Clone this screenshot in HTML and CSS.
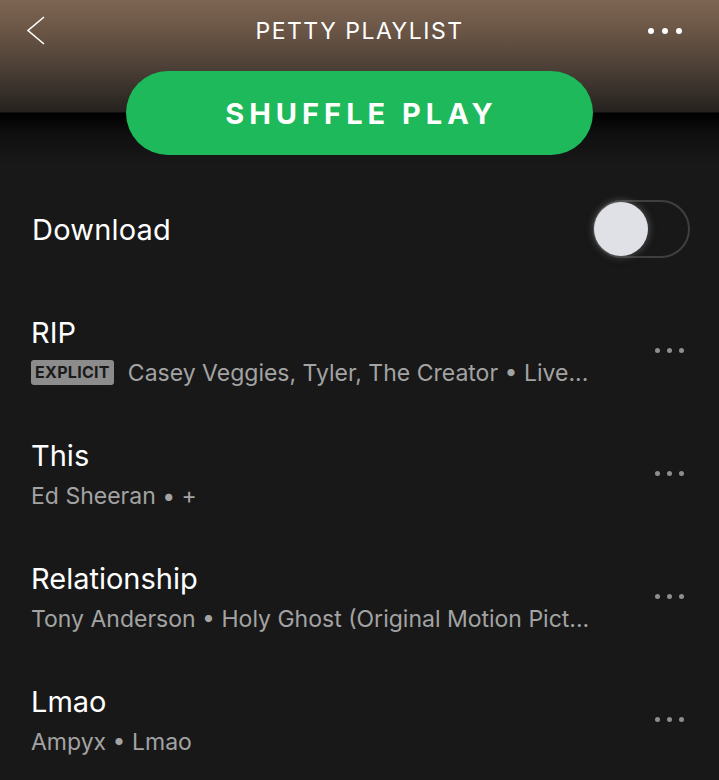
FILE: index.html
```html
<!DOCTYPE html>
<html>
<head>
<meta charset="utf-8">
<link rel="stylesheet" href="styles.css">
</head>
<body>
<div class="page">
  <header class="topbar">
    <svg class="back" width="20" height="30" viewBox="0 0 20 30"><polyline points="18,1 2,14.5 18,28" fill="none" stroke="#fff" stroke-width="1.6"/></svg>
    <div class="title">PETTY PLAYLIST</div>
    <div class="more"><span></span><span></span><span></span></div>
  </header>
  <div class="shuffle-wrap"><button class="shuffle">SHUFFLE PLAY</button></div>
  <div class="download">
    <span class="download-label">Download</span>
    <div class="toggle"><div class="knob"></div></div>
  </div>
  <ul class="tracks">
    <li class="track">
      <div class="info">
        <div class="name">RIP</div>
        <div class="sub"><span class="explicit">EXPLICIT</span>Casey Veggies, Tyler, The Creator • Live...</div>
      </div>
      <div class="dots"><span></span><span></span><span></span></div>
    </li>
    <li class="track">
      <div class="info">
        <div class="name">This</div>
        <div class="sub">Ed Sheeran • +</div>
      </div>
      <div class="dots"><span></span><span></span><span></span></div>
    </li>
    <li class="track">
      <div class="info">
        <div class="name">Relationship</div>
        <div class="sub">Tony Anderson • Holy Ghost (Original Motion Pict...</div>
      </div>
      <div class="dots"><span></span><span></span><span></span></div>
    </li>
    <li class="track">
      <div class="info">
        <div class="name">Lmao</div>
        <div class="sub">Ampyx • Lmao</div>
      </div>
      <div class="dots"><span></span><span></span><span></span></div>
    </li>
  </ul>
</div>
</body>
</html>
```

FILE: styles.css
```css
html, body { margin: 0; padding: 0; background: #181818; }
body { font-family: Inter, "Noto Sans", sans-serif; color: #fff; }
.page {
  width: 719px;
  height: 780px;
  overflow: hidden;
  background: linear-gradient(to bottom, #7d6552 0px, #6b5646 30px, #4a3e35 70px, #2b2622 105px, #25211e 112px, #000 113px, #101010 135px, #181818 165px, #181818 100%);
}
.topbar {
  height: 62px;
  display: flex;
  align-items: center;
  justify-content: space-between;
  padding: 0 37px 0 26px;
  position: relative;
}
.back { display: block; }
.title {
  position: absolute;
  left: 0; right: 0; top: 0;
  line-height: 62px;
  text-align: center;
  font-size: 23px;
  letter-spacing: 1.5px;
  font-weight: 400;
}
.more { display: flex; gap: 8px; }
.more span { width: 6px; height: 6px; border-radius: 50%; background: #fff; display: block; }
.shuffle-wrap { display: flex; justify-content: center; padding-top: 9px; padding-left: 2px; padding-right: 3px; }
.shuffle {
  width: 467px;
  height: 84px;
  border: none;
  border-radius: 42px;
  background: #1db95a;
  color: #fff;
  font-family: Inter, sans-serif;
  font-weight: 700;
  font-size: 29px;
  letter-spacing: 5px;
  padding: 0;
  text-indent: 5px;
}
.download {
  margin-top: 14px;
  height: 120px;
  display: flex;
  align-items: center;
  justify-content: space-between;
  padding: 0 29px 0 32px;
}
.download-label { font-size: 29px; letter-spacing: 0.2px; }
.toggle {
  width: 93px;
  height: 54px;
  border: 2px solid #3f3f3f;
  border-radius: 29px;
  position: relative;
}
.knob {
  position: absolute;
  left: -1px; top: 0;
  width: 54px; height: 54px;
  border-radius: 50%;
  background: #e0e1e6;
  box-shadow: 0 0 8px rgba(255,255,255,0.35), 0 2px 10px rgba(0,0,0,0.4);
}
.tracks { list-style: none; margin: 0; padding: 0; }
.track {
  height: 123px;
  display: flex;
  align-items: center;
  justify-content: space-between;
  padding: 0 35px 0 31px;
  box-sizing: border-box;
}
.info { display: flex; flex-direction: column; gap: 7px; }
.name { font-size: 29px; line-height: 37px; }
.sub { font-size: 23px; line-height: 30px; color: #a3a3a3; display: flex; align-items: center; white-space: nowrap; }
.explicit {
  background: #8c8c8c;
  color: #1a1a1a;
  font-size: 16px;
  font-weight: 700;
  line-height: 25px;
  height: 25px;
  padding: 0 4px;
  border-radius: 3px;
  margin-right: 14px;
  letter-spacing: 0.3px;
}
.dots { display: flex; gap: 7px; }
.dots span { width: 5px; height: 5px; border-radius: 50%; background: #8e8e8e; display: block; }
```
